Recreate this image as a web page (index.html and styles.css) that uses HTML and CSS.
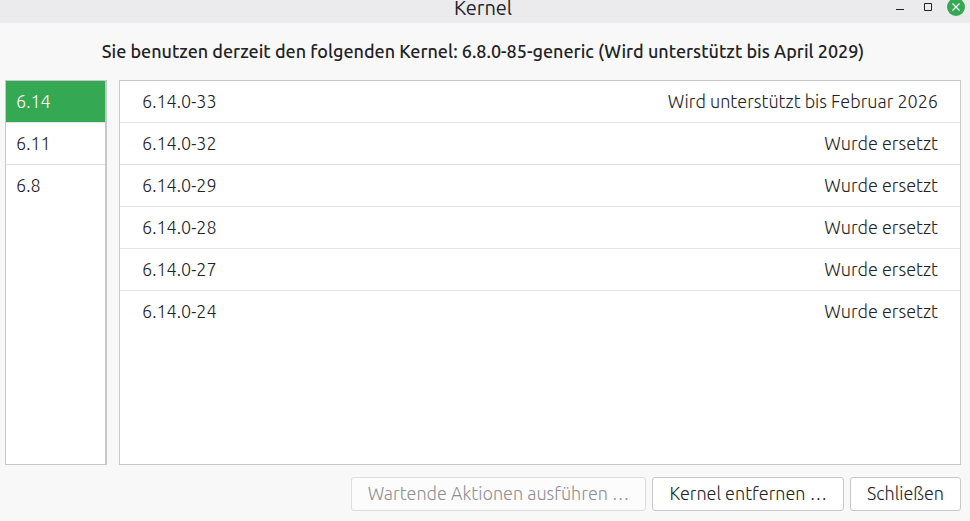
FILE: index.html
```html
<!DOCTYPE html>
<html lang="de">
<head>
  <meta charset="UTF-8">
  <meta name="viewport" content="width=device-width, initial-scale=1.0">
  <title>Kernel</title>
  <link rel="stylesheet" href="styles.css">
</head>
<body>
  <div class="window">
    <header class="titlebar">
      <h1 class="title">Kernel</h1>
      <div class="window-controls">
        <button class="control" type="button" aria-label="Minimieren">
          <svg width="18" height="18" viewBox="0 0 18 18"><path d="M5 11.5h8" stroke="#222226"/></svg>
        </button>
        <button class="control" type="button" aria-label="Maximieren">
          <svg width="18" height="18" viewBox="0 0 18 18"><path d="M5.5 5.5h7v7h-7z" fill="none" stroke="#222226"/></svg>
        </button>
        <button class="control" type="button" aria-label="Fenster schließen">
          <svg width="18" height="18" viewBox="0 0 18 18">
            <circle cx="9" cy="9" r="9" fill="#35a854"/>
            <path d="M5.5 5.5l7 7M12.5 5.5l-7 7" stroke="#fff" stroke-width="1.3"/>
          </svg>
        </button>
      </div>
    </header>

    <main class="content">
      <p class="current">Sie benutzen derzeit den folgenden Kernel: 6.8.0-85-generic (Wird unterstützt bis April 2029)</p>

      <div class="panels">
        <nav class="series">
          <button class="series-item active" type="button">6.14</button>
          <button class="series-item" type="button">6.11</button>
          <button class="series-item" type="button">6.8</button>
        </nav>

        <div class="kernels">
          <table class="kernel-table">
            <tbody>
              <tr><td>6.14.0-33</td><td class="state">Wird unterstützt bis Februar 2026</td></tr>
              <tr><td>6.14.0-32</td><td class="state">Wurde ersetzt</td></tr>
              <tr><td>6.14.0-29</td><td class="state">Wurde ersetzt</td></tr>
              <tr><td>6.14.0-28</td><td class="state">Wurde ersetzt</td></tr>
              <tr><td>6.14.0-27</td><td class="state">Wurde ersetzt</td></tr>
              <tr><td>6.14.0-24</td><td class="state">Wurde ersetzt</td></tr>
            </tbody>
          </table>
        </div>
      </div>

      <div class="actions">
        <button class="btn" type="button" disabled>Wartende Aktionen ausführen …</button>
        <button class="btn" type="button">Kernel entfernen …</button>
        <button class="btn" type="button">Schließen</button>
      </div>
    </main>
  </div>
</body>
</html>
```

FILE: styles.css
```css
* {
  box-sizing: border-box;
}
body {
  margin: 0;
  font-family: Ubuntu, "Noto Sans", sans-serif;
  font-size: 18px;
  font-weight: 350;
  line-height: 24px;
  color: #222226;
  background-color: #f8f8f8;
}
button {
  font: inherit;
  color: inherit;
}
.window {
  display: flex;
  flex-direction: column;
  min-height: 100vh;
}

/* title bar */
.titlebar {
  display: grid;
  grid-template-columns: 1fr auto 1fr;
  height: 23px;
  padding: 0 5px 0 1px;
  background-color: #ebebed;
}
.title {
  grid-column: 2;
  margin: 0;
  font-size: 20px;
  font-weight: 400;
  line-height: 16px;
}
.window-controls {
  display: flex;
  justify-content: flex-end;
  gap: 10px;
  height: 16px;
}
.control {
  display: flex;
  align-items: flex-end;
  padding: 0;
  border: none;
  background: none;
}

/* content */
.content {
  display: flex;
  flex: 1;
  flex-direction: column;
  padding: 16px 9px 10px 5px;
}
.current {
  margin: 0 0 17px;
  font-weight: 500;
  text-align: center;
}
.panels {
  display: flex;
  flex: 1;
  gap: 12px;
}
.series {
  width: 102px;
  border: 1px solid #c8c7cc;
  border-right-width: 2px;
  background-color: #fff;
}
.series-item {
  display: block;
  width: 100%;
  height: 42px;
  padding: 0 10px 2px;
  border: none;
  border-bottom: 1px solid #e4e4e6;
  background-color: #fff;
  text-align: left;
}
.series-item:last-child {
  border-bottom: none;
}
.series-item.active {
  background-color: #35a854;
  color: #fff;
}
.kernels {
  flex: 1;
  border: 1px solid #c8c7cc;
  background-color: #fff;
}
.kernel-table {
  width: 100%;
  border-spacing: 0;
}
.kernel-table td {
  height: 42px;
  padding: 0 22px 2px;
  border-bottom: 1px solid #e4e4e6;
}
.kernel-table tr:last-child td {
  border-bottom: none;
}
.kernel-table .state {
  text-align: right;
}

/* buttons */
.actions {
  display: flex;
  justify-content: flex-end;
  gap: 6px;
  margin-top: 12px;
}
.btn {
  height: 34px;
  padding: 0 16px 2px;
  border: 1px solid #c8c7cc;
  border-radius: 3px;
  background-color: #fff;
}
.btn:disabled {
  border-color: #dddde0;
  background-color: #fcfcfc;
  color: #909094;
}
```
